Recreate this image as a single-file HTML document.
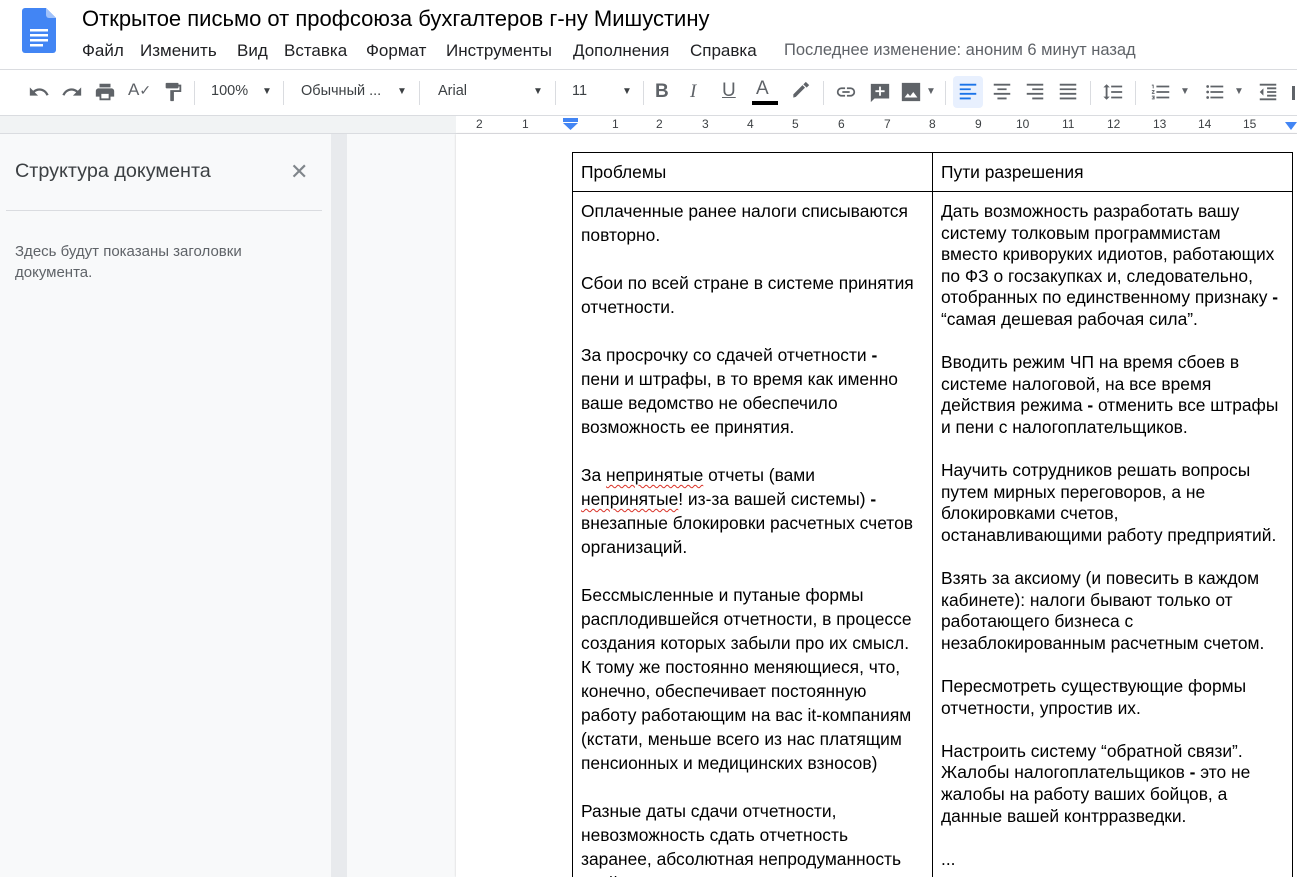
<!DOCTYPE html>
<html><head><meta charset="utf-8"><style>
*{box-sizing:border-box;margin:0;padding:0}
html{width:1297px;height:877px;overflow:hidden}
body{width:1297px;height:877px;overflow:hidden;background:#f8f9fa;font-family:"Liberation Sans",Arial,sans-serif;position:relative;color:#202124}
.hdr{position:absolute;left:0;top:0;width:1297px;height:70px;background:#fff;border-bottom:1px solid #dadce0}
.title{position:absolute;left:82px;top:6px;font-size:22px;color:#000;white-space:nowrap}
.menu span{position:absolute;top:41px;font-size:17px;color:#202124;white-space:nowrap}
.menu .last{color:#5f6368;font-size:16.5px}
.tb{position:absolute;left:0;top:70px;width:1297px;height:46px;background:#fff;border-bottom:1px solid #dadce0}
.tb .t{position:absolute;top:13px;font-size:14.5px;color:#3c4043}
.sep{position:absolute;top:11px;width:1px;height:24px;background:#dadce0}
.ic{position:absolute;top:11px}
.ruler{position:absolute;left:0;top:116px;width:1297px;height:18px;background:#f1f3f4;border-bottom:1px solid #dadce0}
.rw{position:absolute;left:456px;top:0;width:841px;height:17px;background:#fff}
.rn{position:absolute;top:1px;font-size:12px;color:#3c4043}
.side{position:absolute;left:0;top:134px;width:331px;height:743px;background:#f8f9fa}
.strip{position:absolute;left:331px;top:134px;width:16px;height:743px;background:#e8eaed}
.page{position:absolute;left:456px;top:134px;width:841px;height:743px;background:#fff;box-shadow:0 0 2px #ccc;overflow:hidden}
table{position:absolute;left:116px;top:18px;border-collapse:collapse;font-size:17.4px;color:#000}
td{border:1px solid #000;vertical-align:top;padding:0 8px;width:360px}
.h td{height:39px;padding-top:7px;line-height:24px}
.l{line-height:24px;padding-top:7px}
.r{line-height:21.6px;padding-top:9px}
.sp{text-decoration:underline wavy #d93025;text-decoration-thickness:1px;text-underline-offset:3px}
</style></head><body>
<div class="hdr">
<svg style="position:absolute;left:22px;top:8px" width="34" height="45" viewBox="0 0 34 45"><path d="M3 0h21l10 10v32a3 3 0 0 1-3 3H3a3 3 0 0 1-3-3V3a3 3 0 0 1 3-3z" fill="#4285f4"/><path d="M24 0l10 10H27a3 3 0 0 1-3-3z" fill="#a1c2fa"/><rect x="8" y="21" width="18" height="2.5" fill="#fff"/><rect x="8" y="26" width="18" height="2.5" fill="#fff"/><rect x="8" y="31" width="18" height="2.5" fill="#fff"/><rect x="8" y="36" width="13" height="2.5" fill="#fff"/></svg>
<div class="title">Открытое письмо от профсоюза бухгалтеров г-ну Мишустину</div>
<div class="menu"><span style="left:82px">Файл</span><span style="left:140px">Изменить</span><span style="left:237px">Вид</span><span style="left:284px">Вставка</span><span style="left:366px">Формат</span><span style="left:446px">Инструменты</span><span style="left:573px">Дополнения</span><span style="left:690px">Справка</span><span class="last" style="left:784px">Последнее изменение: аноним 6 минут назад</span></div>
</div>
<div class="tb">
<svg class="ic" style="left:28px" width="22" height="22" viewBox="0 0 24 24"><path d="M12.5 8c-2.6 0-5 1-6.9 2.6L2 7v9h9l-3.6-3.6c1.4-1.2 3.2-1.9 5.1-1.9 3.5 0 6.5 2.3 7.6 5.5l2.4-.8C21 11 17.1 8 12.5 8z" fill="#5f6368"/></svg>
<svg class="ic" style="left:61px" width="22" height="22" viewBox="0 0 24 24"><path d="M11.5 8c2.6 0 5 1 6.9 2.6L22 7v9h-9l3.6-3.6c-1.4-1.2-3.2-1.9-5.1-1.9-3.5 0-6.5 2.3-7.6 5.5L1.5 15.2C3 11 6.9 8 11.5 8z" fill="#5f6368"/></svg>
<svg class="ic" style="left:94px" width="22" height="22" viewBox="0 0 24 24"><path d="M19 8H5c-1.7 0-3 1.3-3 3v6h4v4h12v-4h4v-6c0-1.7-1.3-3-3-3zm-3 11H8v-5h8v5zM18 3H6v4h12V3z" fill="#5f6368"/></svg>
<div class="t" style="left:128px;font-size:17px;top:10px;color:#5f6368">A<span style="font-size:14px">✓</span></div>
<svg class="ic" style="left:162px" width="22" height="22" viewBox="0 0 24 24"><path d="M18 4V3c0-.6-.4-1-1-1H5c-.6 0-1 .4-1 1v4c0 .6.4 1 1 1h12c.6 0 1-.4 1-1V6h1v4H9v11c0 .6.4 1 1 1h2c.6 0 1-.4 1-1v-9h8V4h-3z" fill="#5f6368"/></svg>
<div class="sep" style="left:194px"></div>
<div class="t" style="left:211px">100%</div><div class="t" style="left:262px;font-size:10px;top:16px">▼</div>
<div class="sep" style="left:283px"></div>
<div class="t" style="left:301px">Обычный ...</div><div class="t" style="left:397px;font-size:10px;top:16px">▼</div>
<div class="sep" style="left:419px"></div>
<div class="t" style="left:438px">Arial</div><div class="t" style="left:533px;font-size:10px;top:16px">▼</div>
<div class="sep" style="left:555px"></div>
<div class="t" style="left:572px">11</div><div class="t" style="left:622px;font-size:10px;top:16px">▼</div>
<div class="sep" style="left:643px"></div>
<div class="t" style="left:655px;font-size:19px;top:11px;font-weight:bold;color:#5f6368">B</div>
<div class="t" style="left:690px;font-size:19px;top:11px;font-style:italic;color:#5f6368;font-family:'Liberation Serif',serif">I</div>
<div class="t" style="left:722px;font-size:19px;top:10px;text-decoration:underline;color:#5f6368">U</div>
<div class="t" style="left:756px;font-size:19px;top:8px;color:#5f6368">A</div><div style="position:absolute;left:752px;top:31px;width:26px;height:4px;background:#000"></div>
<svg class="ic" style="left:790px" width="20" height="20" viewBox="0 0 24 24"><path d="M4 20l3-1 11-11-3-3L4 16zM16 4l3-3 4 4-3 3z" fill="#5f6368"/></svg>
<div class="sep" style="left:823px"></div>
<svg class="ic" style="left:834px" width="24" height="22" viewBox="0 0 24 24"><path d="M3.9 12a3.1 3.1 0 0 1 3.1-3.1h4V7H7a5 5 0 0 0 0 10h4v-1.9H7A3.1 3.1 0 0 1 3.9 12zM8 13h8v-2H8zm9-6h-4v1.9h4a3.1 3.1 0 0 1 0 6.2h-4V17h4a5 5 0 0 0 0-10z" fill="#5f6368"/></svg>
<svg class="ic" style="left:869px" width="22" height="24" viewBox="0 0 24 24"><path d="M2 2h20v16H6l-4 4zM11 5v4H7v2h4v4h2v-4h4V9h-4V5z" fill="#5f6368" fill-rule="evenodd"/></svg>
<svg class="ic" style="left:900px" width="22" height="22" viewBox="0 0 24 24"><path d="M2 2h20v20H2zM5 18h14l-4.5-6-3.5 4.5-2.5-3z" fill="#5f6368" fill-rule="evenodd"/></svg>
<div class="t" style="left:926px;font-size:10px;top:16px;color:#5f6368">▼</div>
<div class="sep" style="left:945px"></div>
<div style="position:absolute;left:953px;top:6px;width:30px;height:32px;background:#e8f0fe;border-radius:4px"></div>
<svg class="ic" style="left:957px" width="22" height="22" viewBox="0 0 24 24"><path d="M3 3h18v2H3zm0 5h12v2H3zm0 5h18v2H3zm0 5h12v2H3z" fill="#1a73e8"/></svg>
<svg class="ic" style="left:991px" width="22" height="22" viewBox="0 0 24 24"><path d="M3 3h18v2H3zm4 5h10v2H7zm-4 5h18v2H3zm4 5h10v2H7z" fill="#5f6368"/></svg>
<svg class="ic" style="left:1024px" width="22" height="22" viewBox="0 0 24 24"><path d="M3 3h18v2H3zm6 5h12v2H9zm-6 5h18v2H3zm6 5h12v2H9z" fill="#5f6368"/></svg>
<svg class="ic" style="left:1057px" width="22" height="22" viewBox="0 0 24 24"><path d="M3 3h18v2H3zm0 5h18v2H3zm0 5h18v2H3zm0 5h18v2H3z" fill="#5f6368"/></svg>
<div class="sep" style="left:1090px"></div>
<svg class="ic" style="left:1101px" width="24" height="22" viewBox="0 0 24 24"><path d="M6 7h2.5L5 3.5 1.5 7H4v10H1.5L5 20.5 8.5 17H6zm4-2v2h12V5zm0 14h12v-2H10zm0-6h12v-2H10z" fill="#5f6368"/></svg>
<div class="sep" style="left:1135px"></div>
<svg class="ic" style="left:1150px" width="22" height="22" viewBox="0 0 24 24"><path d="M2 17h2v.5H3v1h1v.5H2v1h3v-4H2zm1-9h1V4H2v1h1zm-1 3h1.8L2 13.1v.9h3v-1H3.2L5 10.9V10H2zm5-6v2h14V5zm0 14h14v-2H7zm0-6h14v-2H7z" fill="#5f6368"/></svg>
<div class="t" style="left:1180px;font-size:10px;top:16px;color:#5f6368">▼</div>
<svg class="ic" style="left:1204px" width="22" height="22" viewBox="0 0 24 24"><path d="M4 10.5a1.5 1.5 0 1 0 0 3 1.5 1.5 0 0 0 0-3zm0-6a1.5 1.5 0 1 0 0 3 1.5 1.5 0 0 0 0-3zm0 12a1.5 1.5 0 1 0 0 3 1.5 1.5 0 0 0 0-3zM7 19h14v-2H7zm0-6h14v-2H7zm0-8v2h14V5z" fill="#5f6368"/></svg>
<div class="t" style="left:1234px;font-size:10px;top:16px;color:#5f6368">▼</div>
<svg class="ic" style="left:1257px" width="22" height="22" viewBox="0 0 24 24"><path d="M11 17h10v-2H11zm-8-5l4 4V8zm0 9h18v-2H3zM3 3v2h18V3zm8 6h10V7H11zm0 4h10v-2H11z" fill="#5f6368"/></svg>
<div class="sep" style="left:1292px;width:3px;background:#5f6368;height:14px;top:16px"></div>
</div>
<div class="ruler"><div class="rw"></div>
<div class="rn" style="left:476px">2</div><div class="rn" style="left:522px">1</div>
<svg style="position:absolute;left:563px;top:2px" width="15" height="13"><rect x="0" y="0" width="15" height="4" fill="#4285f4"/><path d="M0 5h15l-7.5 7z" fill="#4285f4"/></svg>
<div class="rn" style="left:612px">1</div><div class="rn" style="left:656px">2</div><div class="rn" style="left:702px">3</div><div class="rn" style="left:747px">4</div><div class="rn" style="left:792px">5</div><div class="rn" style="left:838px">6</div><div class="rn" style="left:884px">7</div><div class="rn" style="left:929px">8</div><div class="rn" style="left:975px">9</div><div class="rn" style="left:1016px">10</div><div class="rn" style="left:1062px">11</div><div class="rn" style="left:1107px">12</div><div class="rn" style="left:1153px">13</div><div class="rn" style="left:1198px">14</div><div class="rn" style="left:1243px">15</div>
<svg style="position:absolute;left:1285px;top:6px" width="12" height="10"><path d="M0 0h12L6 8z" fill="#4285f4"/></svg>
</div>
<div class="side">
<div style="position:absolute;left:15px;top:26px;font-size:19.8px;color:#3c4043">Структура документа</div>
<div style="position:absolute;left:290px;top:25px;font-size:22px;color:#80868b">✕</div>
<div style="position:absolute;left:6px;top:76px;width:316px;height:1px;background:#dadce0"></div>
<div style="position:absolute;left:15px;top:107px;font-size:15px;color:#5f6368;line-height:21px">Здесь будут показаны заголовки<br>документа.</div>
</div>
<div class="strip"></div>
<div class="page">
<table>
<tr class="h"><td>Проблемы</td><td>Пути разрешения</td></tr>
<tr><td class="l">Оплаченные ранее налоги списываются<br>повторно.<br><br>Сбои по всей стране в системе принятия<br>отчетности.<br><br>За просрочку со сдачей отчетности <b>-</b><br>пени и штрафы, в то время как именно<br>ваше ведомство не обеспечило<br>возможность ее принятия.<br><br>За <span class="sp">непринятые</span> отчеты (вами<br><span class="sp">непринятые</span>! из-за вашей системы) <b>-</b><br>внезапные блокировки расчетных счетов<br>организаций.<br><br>Бессмысленные и путаные формы<br>расплодившейся отчетности, в процессе<br>создания которых забыли про их смысл.<br>К тому же постоянно меняющиеся, что,<br>конечно, обеспечивает постоянную<br>работу работающим на вас it-компаниям<br>(кстати, меньше всего из нас платящим<br>пенсионных и медицинских взносов)<br><br>Разные даты сдачи отчетности,<br>невозможность сдать отчетность<br>заранее, абсолютная непродуманность<br>всей системы</td>
<td class="r">Дать возможность разработать вашу<br>систему толковым программистам<br>вместо криворуких идиотов, работающих<br>по ФЗ о госзакупках и, следовательно,<br>отобранных по единственному признаку <b>-</b><br>“самая дешевая рабочая сила”.<br><br>Вводить режим ЧП на время сбоев в<br>системе налоговой, на все время<br>действия режима <b>-</b> отменить все штрафы<br>и пени с налогоплательщиков.<br><br>Научить сотрудников решать вопросы<br>путем мирных переговоров, а не<br>блокировками счетов,<br>останавливающими работу предприятий.<br><br>Взять за аксиому (и повесить в каждом<br>кабинете): налоги бывают только от<br>работающего бизнеса с<br>незаблокированным расчетным счетом.<br><br>Пересмотреть существующие формы<br>отчетности, упростив их.<br><br>Настроить систему “обратной связи”.<br>Жалобы налогоплательщиков <b>-</b> это не<br>жалобы на работу ваших бойцов, а<br>данные вашей контрразведки.<br><br>...</td></tr>
</table>
</div>
</body></html>
